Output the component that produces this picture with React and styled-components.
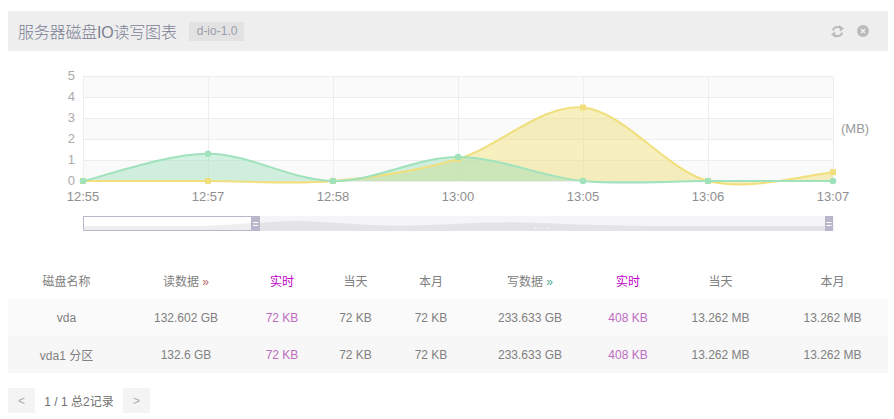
import React from "react";
import styled, { createGlobalStyle } from "styled-components";

const Global = createGlobalStyle`
  html, body { margin: 0; padding: 0; background: #fff; }
  body { font-family: "Liberation Sans", "Noto Sans CJK SC", sans-serif; font-size: 12px; color: #777; }
`;

const Page = styled.div`
  width: 894px;
  height: 419px;
  padding: 11px 6px 0 8px;
  box-sizing: border-box;
  overflow: hidden;
`;
const Header = styled.header`
  height: 40px;
  background: #eee;
  display: flex;
  align-items: center;
  padding: 0 19px 0 10px;
`;
const Title = styled.h2`
  margin: 0;
  font-size: 16px;
  font-weight: 300;
  letter-spacing: -0.2px;
  color: #7b7e93;
`;
const Tag = styled.span`
  margin-left: 12px;
  background: #e2e2e2;
  color: #9a9eab;
  font-size: 12px;
  height: 19px;
  line-height: 19px;
  padding: 0 7px 0 8px;
`;
const Tools = styled.div`
  margin-left: auto;
  display: flex;
  align-items: center;
  gap: 13px;
  color: #bbb;
`;
const ChartSvg = styled.svg`
  display: block;
  width: 880px;
  height: 210px;
`;
const AxisText = styled.text`
  font-family: "Liberation Sans", sans-serif;
  font-size: ${(p) => p.$size || 13}px;
  fill: ${(p) => p.$fill || "#8f8f8f"};
`;
const Table = styled.table`
  width: 880px;
  border-collapse: collapse;
  table-layout: fixed;
  text-align: center;
`;
const Th = styled.th`
  height: 38px;
  padding: 0;
  font-weight: 400;
  color: ${(p) => (p.$live ? "#c000c8" : "#808080")};
`;
const Tr = styled.tr`
  background: ${(p) => (p.$alt ? "#f7f7f7" : "#fafafa")};
`;
const Td = styled.td`
  height: 37px;
  padding: 0;
  color: ${(p) => (p.$live ? "#bd6cc0" : "#808080")};
`;
const Chev = styled.span`
  color: ${(p) => p.$c};
  font-size: 12px;
`;
const Pager = styled.nav`
  display: flex;
  align-items: center;
  margin-top: 15px;
  height: 25px;
`;
const PageBtn = styled.button`
  width: 27px;
  height: 25px;
  border: 0;
  padding: 0;
  background: #f4f4f4;
  color: #aaa;
  font: 12px "Liberation Sans", sans-serif;
`;
const PageInfo = styled.span`
  width: 88px;
  text-align: center;
  color: #707070;
`;

const X = [83, 208, 333, 458, 583, 708, 833];
const LABELS = ["12:55", "12:57", "12:58", "13:00", "13:05", "13:06", "13:07"];
const toY = (v) => 181 - v * 21;
const GREEN = [0, 1.3, 0, 1.14, 0, 0, 0];
const YELLOW = [0, 0, 0, 1.05, 3.5, 0, 0.42];

function spline(vals) {
  const p = vals.map((v, i) => [X[i], toY(v)]);
  let d = `M${p[0][0]} ${p[0][1]}`;
  for (let i = 0; i < p.length - 1; i++) {
    const a = p[Math.max(0, i - 1)], b = p[i], c = p[i + 1], e = p[Math.min(p.length - 1, i + 2)];
    d += ` C${b[0] + (c[0] - a[0]) / 6} ${b[1] + (c[1] - a[1]) / 6} ${c[0] - (e[0] - b[0]) / 6} ${c[1] - (e[1] - b[1]) / 6} ${c[0]} ${c[1]}`;
  }
  return d;
}

function Chart() {
  const g = spline(GREEN), y = spline(YELLOW);
  const close = " L833 181 L83 181 Z";
  return (
    <ChartSvg viewBox="8 51 880 210">
      {[0, 2, 4].map((i) => (
        <rect key={i} x="83" y={76 + i * 21} width="750" height="21" fill="#fafafa" />
      ))}
      {[0, 1, 2, 3, 4, 5].map((i) => (
        <line key={i} x1="83" x2="833" y1={76.5 + i * 21} y2={76.5 + i * 21} stroke="#eee" />
      ))}
      {X.map((x) => (
        <line key={x} x1={x + 0.5} x2={x + 0.5} y1="76" y2="181" stroke="#eee" />
      ))}
      {[0, 1, 2, 3, 4, 5].map((v) => (
        <AxisText key={v} x="75" y={toY(v) + 4} textAnchor="end" $fill="#aaa">{v}</AxisText>
      ))}
      {X.map((x, i) => (
        <AxisText key={x} x={x} y="201" textAnchor="middle">{LABELS[i]}</AxisText>
      ))}
      <AxisText x="841" y="133" $fill="#999">(MB)</AxisText>

      <path d={y + close} fill="#f0dc6e" fillOpacity="0.45" />
      <path d={g + close} fill="#9be0bb" fillOpacity="0.45" />
      <path d={y} fill="none" stroke="#f0df7c" strokeWidth="2" />
      <path d={g} fill="none" stroke="#a0e2bc" strokeWidth="2" />
      {X.map((x, i) => (
        <rect key={x} x={x - 3} y={toY(YELLOW[i]) - 3} width="6" height="6" fill="#f0df7c" />
      ))}
      {X.map((x, i) => (
        <circle key={x} cx={x} cy={toY(GREEN[i])} r="3.3" fill="#a0e2bc" />
      ))}

      <rect x="83" y="216" width="751" height="15" fill="#f5f5f7" />
      <path d="M260 222.7 C275 221.8 285 221 297 221 C330 221.5 360 225.7 400 225.7 C440 225.7 470 222.3 510 222.3 C540 222.3 570 225 600 225 C620 225.5 640 226 660 226 L833 226 L833 231 L260 231 Z" fill="#e4e4e7" />
      <rect x="84" y="217" width="167" height="13" fill="#fff" />
      <path d="M84 226 L190 226 C215 226 235 224 251 223 L251 230 L84 230 Z" fill="#eeeef0" />
      <path d="M83.5 216.5 H251 M83.5 216.5 V230.5 H251" fill="none" stroke="#b9b5cb" />
      <rect x="251" y="216" width="9" height="15" fill="#b9b5cb" />
      <path d="M253 222.5h5M253 225.5h5" stroke="#fff" />
      <rect x="825" y="216" width="8" height="15" fill="#b9b5cb" />
      <path d="M826.5 222.5h5M826.5 225.5h5" stroke="#fff" />
      {[[535, 227], [541, 227], [547, 227], [541, 222], [547, 222]].map(([dx, dy]) => (
        <rect key={`${dx}-${dy}`} x={dx} y={dy} width="1" height="1" fill="#fff" />
      ))}
    </ChartSvg>
  );
}

const HEAD = [
  ["磁盘名称"],
  ["读数据", "#b56a6a"],
  ["实时", null, true],
  ["当天"],
  ["本月"],
  ["写数据", "#4fa98c"],
  ["实时", null, true],
  ["当天"],
  ["本月"],
];
const ROWS = [
  ["vda", "132.602 GB", "72 KB", "72 KB", "72 KB", "233.633 GB", "408 KB", "13.262 MB", "13.262 MB"],
  ["vda1 分区", "132.6 GB", "72 KB", "72 KB", "72 KB", "233.633 GB", "408 KB", "13.262 MB", "13.262 MB"],
];
const WIDTHS = [117, 122, 70, 77, 74, 124, 72, 113, 111];

export default function App() {
  return (
    <Page>
      <Global />
      <Header>
        <Title>服务器磁盘IO读写图表</Title>
        <Tag>d-io-1.0</Tag>
        <Tools>
          <svg width="13" height="13" viewBox="0 0 13 13" fill="none" stroke="#bbb" strokeWidth="2">
            <path d="M2 5.5 C2.5 3 4.5 2 6.5 2 H9" />
            <path d="M11 7.5 C10.5 10 8.5 11 6.5 11 H4" />
            <path d="M8 0 L13 3.5 L9 6.5 Z M5 13 L0 9.5 L4 6.5 Z" fill="#bbb" stroke="none" />
          </svg>
          <svg width="12" height="12" viewBox="0 0 12 12">
            <circle cx="6" cy="6" r="6" fill="#bbb" />
            <path d="M4 4l4 4M8 4l-4 4" stroke="#eee" strokeWidth="1.6" />
          </svg>
        </Tools>
      </Header>
      <Chart />
      <Table>
        <colgroup>
          {WIDTHS.map((w, i) => <col key={i} width={w} />)}
        </colgroup>
        <thead>
          <tr>
            {HEAD.map(([t, c, live], i) => (
              <Th key={i} $live={live}>
                {t}{c && <Chev $c={c}> »</Chev>}
              </Th>
            ))}
          </tr>
        </thead>
        <tbody>
          {ROWS.map((r, ri) => (
            <Tr key={ri} $alt={ri === 1}>
              {r.map((c, i) => <Td key={i} $live={i === 2 || i === 6}>{c}</Td>)}
            </Tr>
          ))}
        </tbody>
      </Table>
      <Pager>
        <PageBtn>&lt;</PageBtn>
        <PageInfo>1 / 1 总2记录</PageInfo>
        <PageBtn>&gt;</PageBtn>
      </Pager>
    </Page>
  );
}
